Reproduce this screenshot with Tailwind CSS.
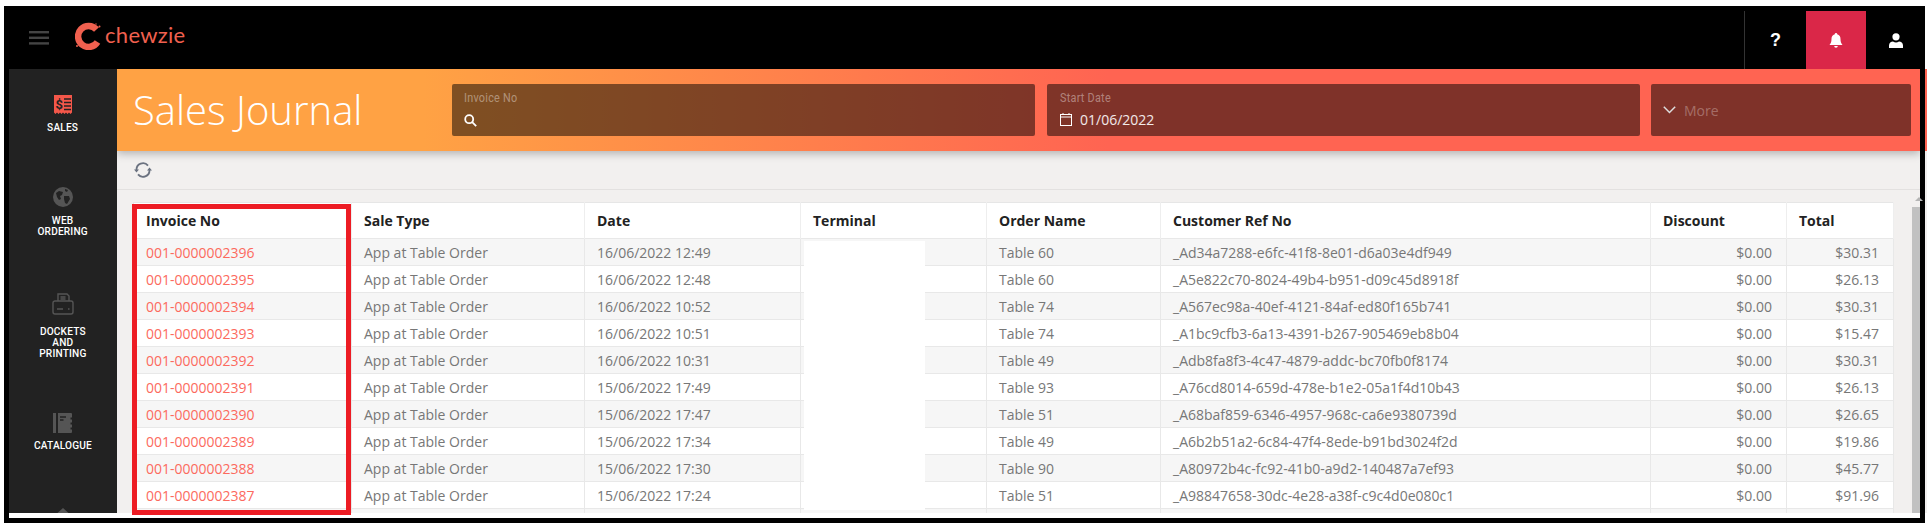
<!DOCTYPE html>
<html lang="en">
<head>
  <meta charset="UTF-8">
  <title>Sales Journal</title>
  <script src="https://cdn.jsdelivr.net/npm/@tailwindcss/browser@4"></script>
</head>
<body class="bg-white overflow-hidden font-['Open_Sans',sans-serif]">
  <div class="relative h-[525px] w-[1927px] pt-[6px] pl-[4px] overflow-hidden">
    <div class="relative h-[517px] w-[1921px] bg-black pl-[5px] pr-[5px] pb-[5px] flex flex-col">
      <!-- top bar -->
      <header class="h-[63px] shrink-0 flex mr-[-5px]">
        <button class="w-[20px] ml-[20px] mt-[25px] self-start">
          <svg width="20" height="14" viewBox="0 0 20 14" fill="#444" class="block"><rect y="0" width="20" height="2.4"/><rect y="5.6" width="20" height="2.4"/><rect y="11.2" width="20" height="2.4"/></svg>
        </button>
        <div class="flex items-start mt-[16px] ml-[26px]">
          <svg width="26" height="28" viewBox="0 0 26 28" class="mr-[4px]"><path d="M21.500 7.500A10.500 10.500 0 1 0 22.500 20" fill="none" stroke="#f0604f" stroke-width="6.500"/><circle cx="24.500" cy="4.500" r="1" fill="#f0604f"/><circle cx="21" cy="2" r=".7" fill="#f0604f"/><circle cx="2" cy="24" r="1" fill="#f0604f"/></svg>
          <span class="text-[#f0604f] text-[22px] leading-[22px] mt-[2px] font-['Lato',sans-serif] tracking-[0.3px]">chewzie</span>
        </div>
        <div class="ml-auto flex pt-[5px]">
          <div class="w-[62px] border-l border-[#333] flex items-center justify-center text-white font-bold text-[18px] font-['Liberation_Sans',sans-serif]">?</div>
          <div class="w-[60px] bg-[#da2748] flex items-center justify-center">
            <svg width="14" height="15" viewBox="0 0 14 15" fill="#fff"><path d="M7 0a1.2 1.2 0 0 1 1.2 1.3C10.5 1.9 11.5 3.700 11.500 6c0 3 .7 4.500 2 6H.5c1.300-1.500 2-3 2-6 0-2.300 1-4.100 3.300-4.700A1.200 1.200 0 0 1 7 0zM5.200 13h3.600A1.800 1.800 0 0 1 7 14.800 1.800 1.800 0 0 1 5.200 13z"/></svg>
          </div>
          <div class="w-[59px] flex items-center justify-center">
            <svg width="14" height="15" viewBox="0 0 14 15" fill="#fff"><circle cx="7" cy="3.800" r="3.600"/><path d="M0 15v-2.500C0 10 2 8.500 4 8.500c1 .6 2 .9 3 .9s2-.3 3-.9c2 0 4 1.500 4 4V15z"/></svg>
          </div>
        </div>
      </header>

      <div class="flex flex-1 min-h-0 bg-white pb-[5px]">
        <!-- sidebar -->
        <nav class="w-[108px] shrink-0 bg-[#222] overflow-hidden flex flex-col items-center text-white text-center font-['Roboto',sans-serif] font-medium text-[11.5px] leading-[11px] tracking-[0.2px]">
          <div class="mt-[26px] flex flex-col items-center">
            <svg width="20" height="20" viewBox="0 0 20 20" class="block"><path d="M1 0h18v17.500l-1.500 1.500-1.500-1.500-1.500 1.500-1.500-1.500-1.500 1.500-1.500-1.500-1.500 1.500-1.500-1.500-1.500 1.500-1.500-1.500-1.500 1.500L1 17.500z" fill="#f4574a"/><text x="2.500" y="13.500" font-size="13" font-weight="700" fill="#222" font-family="Roboto">$</text><path d="M11 4h7M11 7.500h7M11 11h7M11 14.500h7" stroke="#222" stroke-width="1.600"/></svg>
            <span class="mt-[7px] scale-x-[.88]">SALES</span>
          </div>
          <div class="mt-[54px] flex flex-col items-center">
            <svg width="20" height="20" viewBox="0 0 20 20" class="block"><circle cx="10" cy="10" r="10" fill="#555"/><path d="M3 6l3-2 4 1-1 3-2 1 1 3-2 1-2-3zM11 9h5l1 3-3 5-2-1-1-4zM12 2l3 1-1 2-2-1z" fill="#222"/></svg>
            <span class="mt-[8px] scale-x-[.88]">WEB<br>ORDERING</span>
          </div>
          <div class="mt-[56px] flex flex-col items-center">
            <svg width="22" height="22" viewBox="0 0 22 22" fill="none" stroke="#555" stroke-width="1.400" class="block"><path d="M6 8V1h9l2 2v5"/><path d="M5 8H3a2 2 0 0 0-2 2v9a2 2 0 0 0 2 2h16a2 2 0 0 0 2-2v-9a2 2 0 0 0-2-2h-2"/><path d="M5 8h12M8.500 4h5M8.500 6h5M5 16h6M16 16h1.500"/></svg>
            <span class="mt-[11px] scale-x-[.88]">DOCKETS<br>AND<br>PRINTING</span>
          </div>
          <div class="mt-[54px] flex flex-col items-center">
            <svg width="20" height="20" viewBox="0 0 20 20" class="block"><rect x="0" y="0" width="3" height="20" fill="#555"/><path d="M5 0h13a1 1 0 0 1 1 1v3.500h-1.500v2H19v3h-1.500v2H19v3h-1.500v2H19V19a1 1 0 0 1-1 1H5z" fill="#555"/><path d="M7 4h6M7 7h3.500" stroke="#222" stroke-width="1.500"/></svg>
            <span class="mt-[7px] scale-x-[.88]">CATALOGUE</span>
          </div>
          <svg class="mt-[57px] shrink-0" width="20" height="20" viewBox="0 0 20 20"><path d="M10 0L20 9V20H0V9z" fill="#555"/></svg>
        </nav>

        <!-- main -->
        <main class="flex-1 min-w-0 bg-[#f2f0ef] flex flex-col overflow-hidden">
          <section class="relative z-10 h-[82px] shrink-0 flex items-center bg-[linear-gradient(to_right,#ffa244_17%,#ff6452_55%)] shadow-[0_3px_8px_rgba(0,0,0,0.25)]">
            <h1 class="w-[335px] pl-[16px] text-white font-light text-[40px] leading-none">Sales Journal</h1>
            <div class="h-[52px] w-[583px] bg-black/50 rounded-[2px] pl-[12px] pt-[7px]">
              <div class="text-white/40 text-[12px] leading-[14px] tracking-[0.3px] font-['Roboto',sans-serif] origin-left scale-x-[.9]">Invoice No</div>
              <div class="mt-[6px] h-[18px] flex items-center">
                <svg width="13" height="13" viewBox="0 0 13 13" fill="none" stroke="#fff" stroke-width="1.800"><circle cx="5.200" cy="5.200" r="4"/><path d="M8.200 8.200l4 4"/></svg>
              </div>
            </div>
            <div class="h-[52px] w-[593px] ml-[12px] bg-black/50 rounded-[2px] pl-[13px] pt-[7px]">
              <div class="text-white/40 text-[12px] leading-[14px] tracking-[0.3px] font-['Roboto',sans-serif] origin-left scale-x-[.9]">Start Date</div>
              <div class="mt-[5px] h-[18px] flex items-center text-white/90 text-[14px]">
                <svg width="12" height="13" viewBox="0 0 12 13" fill="none" stroke="#fff" stroke-width="1" class="mr-[8px]"><rect x="0.500" y="1.500" width="11" height="11"/><path d="M.5 4h11M3 0v2M9 0v2"/></svg>01/06/2022
              </div>
            </div>
            <div class="h-[52px] w-[260px] ml-[11px] bg-black/50 rounded-[2px] pl-[12px] flex items-center">
              <svg width="13" height="8" viewBox="0 0 13 8" fill="none" stroke="#ddd" stroke-width="1.500" class="mr-[8px]"><path d="M.8.8L6.500 6.500 12.200.8"/></svg>
              <span class="text-white/30 text-[14px]">More</span>
            </div>
          </section>

          <div class="h-[39px] shrink-0 border-b border-[#e3e1e0] pl-[17px] flex items-center">
            <svg width="18" height="18" viewBox="0 0 18 18" fill="none" stroke="#6b7280" stroke-width="1.800"><path d="M2.500 9A6.500 6.500 0 0 1 14 4.600"/><path d="M15.500 9A6.500 6.500 0 0 1 4 13.400"/><path d="M0 8.500h5L2.500 11.500zM13 9.500h5L15.500 6.500z" fill="#6b7280" stroke="none"/></svg>
          </div>

          <div class="flex-1 min-h-0 flex pl-[16px] pt-[12px] overflow-hidden">
            <table class="table-fixed w-[1760px] shrink-0 h-fit border-collapse bg-white text-[14px] text-[#777] border border-[#e6e6e6]">
              <colgroup>
                <col class="w-[218px]"><col class="w-[233px]"><col class="w-[216px]"><col class="w-[186px]"><col class="w-[174px]"><col class="w-[490px]"><col class="w-[136px]"><col class="w-[107px]">
              </colgroup>
              <thead>
                <tr class="h-[36px] text-left text-[#222] [&>th]:font-bold [&>th]:pl-[12px] [&>th]:border-r [&>th]:border-[#eee]">
                  <th>Invoice No</th><th>Sale Type</th><th>Date</th><th>Terminal</th><th>Order Name</th><th>Customer Ref No</th><th>Discount</th><th>Total</th>
                </tr>
              </thead>
              <tbody class="[&_td]:h-[27px] [&_td]:p-0 [&_td]:pl-[12px] [&_td]:border [&_td]:border-[#e8e8e8] [&_td]:whitespace-nowrap [&_td]:overflow-hidden">
                <tr class="bg-[#f6f6f6]"><td class="text-[#fc6a5e]">001-0000002396</td><td>App at Table Order</td><td>16/06/2022 12:49</td><td></td><td>Table 60</td><td>_Ad34a7288-e6fc-41f8-8e01-d6a03e4df949</td><td class="text-right !pr-[14px]">$0.00</td><td class="text-right !pr-[14px]">$30.31</td></tr>
                <tr><td class="text-[#fc6a5e]">001-0000002395</td><td>App at Table Order</td><td>16/06/2022 12:48</td><td></td><td>Table 60</td><td>_A5e822c70-8024-49b4-b951-d09c45d8918f</td><td class="text-right !pr-[14px]">$0.00</td><td class="text-right !pr-[14px]">$26.13</td></tr>
                <tr class="bg-[#f6f6f6]"><td class="text-[#fc6a5e]">001-0000002394</td><td>App at Table Order</td><td>16/06/2022 10:52</td><td></td><td>Table 74</td><td>_A567ec98a-40ef-4121-84af-ed80f165b741</td><td class="text-right !pr-[14px]">$0.00</td><td class="text-right !pr-[14px]">$30.31</td></tr>
                <tr><td class="text-[#fc6a5e]">001-0000002393</td><td>App at Table Order</td><td>16/06/2022 10:51</td><td></td><td>Table 74</td><td>_A1bc9cfb3-6a13-4391-b267-905469eb8b04</td><td class="text-right !pr-[14px]">$0.00</td><td class="text-right !pr-[14px]">$15.47</td></tr>
                <tr class="bg-[#f6f6f6]"><td class="text-[#fc6a5e]">001-0000002392</td><td>App at Table Order</td><td>16/06/2022 10:31</td><td></td><td>Table 49</td><td>_Adb8fa8f3-4c47-4879-addc-bc70fb0f8174</td><td class="text-right !pr-[14px]">$0.00</td><td class="text-right !pr-[14px]">$30.31</td></tr>
                <tr><td class="text-[#fc6a5e]">001-0000002391</td><td>App at Table Order</td><td>15/06/2022 17:49</td><td></td><td>Table 93</td><td>_A76cd8014-659d-478e-b1e2-05a1f4d10b43</td><td class="text-right !pr-[14px]">$0.00</td><td class="text-right !pr-[14px]">$26.13</td></tr>
                <tr class="bg-[#f6f6f6]"><td class="text-[#fc6a5e]">001-0000002390</td><td>App at Table Order</td><td>15/06/2022 17:47</td><td></td><td>Table 51</td><td>_A68baf859-6346-4957-968c-ca6e9380739d</td><td class="text-right !pr-[14px]">$0.00</td><td class="text-right !pr-[14px]">$26.65</td></tr>
                <tr><td class="text-[#fc6a5e]">001-0000002389</td><td>App at Table Order</td><td>15/06/2022 17:34</td><td></td><td>Table 49</td><td>_A6b2b51a2-6c84-47f4-8ede-b91bd3024f2d</td><td class="text-right !pr-[14px]">$0.00</td><td class="text-right !pr-[14px]">$19.86</td></tr>
                <tr class="bg-[#f6f6f6]"><td class="text-[#fc6a5e]">001-0000002388</td><td>App at Table Order</td><td>15/06/2022 17:30</td><td></td><td>Table 90</td><td>_A80972b4c-fc92-41b0-a9d2-140487a7ef93</td><td class="text-right !pr-[14px]">$0.00</td><td class="text-right !pr-[14px]">$45.77</td></tr>
                <tr><td class="text-[#fc6a5e]">001-0000002387</td><td>App at Table Order</td><td>15/06/2022 17:24</td><td></td><td>Table 51</td><td>_A98847658-30dc-4e28-a38f-c9c4d0e080c1</td><td class="text-right !pr-[14px]">$0.00</td><td class="text-right !pr-[14px]">$91.96</td></tr>
                <tr class="bg-[#f6f6f6]"><td></td><td></td><td></td><td></td><td></td><td></td><td></td><td></td></tr>
              </tbody>
            </table>
          </div>
        </main>
      </div>

      <!-- scrollbar -->
      <div class="absolute left-[1911px] top-[191px] w-0 h-0 border-x-[4px] border-x-transparent border-b-[4px] border-b-[#b5b5b5]"></div>
      <div class="absolute left-[1908px] top-[201px] w-[8px] h-[306px] bg-[#c1c1c1]"></div>
      <!-- annotation box drawn over the first column, and the terminal redaction -->
      <div class="absolute left-[128px] top-[198px] w-[219px] h-[311px] border-[5px] border-[#ed1c24]"></div>
      <div class="absolute left-[800px] top-[235px] w-[121px] h-[269px] bg-white"></div>
    </div>
    <!-- sliver of the page showing right of the frame -->
    <div class="absolute left-[1925px] top-[69px] w-[2px] h-[82px] bg-[#ff6452]"></div>
    <div class="absolute left-[1925px] top-[151px] w-[2px] h-[362px] bg-[#f2f0ef]"></div>
  </div>
</body>
</html>
